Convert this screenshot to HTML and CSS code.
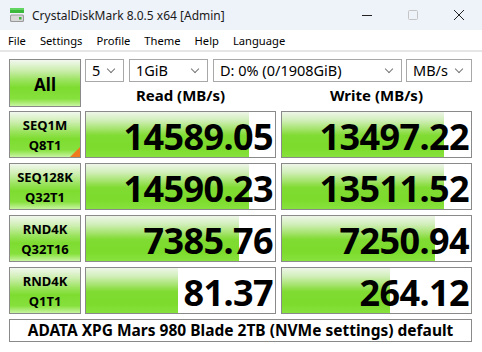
FILE: index.html
```html
<!DOCTYPE html>
<html lang="en">
<head>
    <meta charset="UTF-8">
    <title>CrystalDiskMark 8.0.5 x64 [Admin]</title>
    <link rel="stylesheet" href="styles.css">
</head>
<body>
    <div class="titlebar">
        <svg class="app-icon" width="16" height="16" viewBox="0 0 16 16">
            <rect x="1" y="1" width="14" height="5" fill="#3cb83c"/>
            <rect x="1" y="1" width="14" height="2" fill="#62d462"/>
            <rect x="1" y="7.5" width="14" height="7.5" rx="1.5" fill="#9a9a9a"/>
            <rect x="2" y="8.5" width="12" height="5.5" rx="1" fill="#d8d8d8"/>
            <rect x="10" y="10" width="2.5" height="2.5" fill="#3cb83c"/>
        </svg>
        <span class="title">CrystalDiskMark 8.0.5 x64 [Admin]</span>
        <div class="win-controls">
            <span class="ctl">
                <svg width="12" height="12" viewBox="0 0 12 12"><path d="M1 6.5h10" stroke="#222" stroke-width="1"/></svg>
            </span>
            <span class="ctl">
                <svg width="12" height="12" viewBox="0 0 12 12"><rect x="1.5" y="1.5" width="9" height="9" rx="1" fill="none" stroke="#c4c4c4" stroke-width="1"/></svg>
            </span>
            <span class="ctl">
                <svg width="12" height="12" viewBox="0 0 12 12"><path d="M1 1l10 10M11 1L1 11" stroke="#222" stroke-width="1"/></svg>
            </span>
        </div>
    </div>

    <div class="menubar">
        <span>File</span>
        <span>Settings</span>
        <span>Profile</span>
        <span>Theme</span>
        <span>Help</span>
        <span>Language</span>
    </div>

    <div class="main">
        <div class="top">
            <div class="btn all-btn">All</div>
            <div class="top-right">
                <div class="combos">
                    <div class="combo c-count">5</div>
                    <div class="combo c-size">1GiB</div>
                    <div class="combo c-drive">D: 0% (0/1908GiB)</div>
                    <div class="combo c-unit">MB/s</div>
                </div>
                <div class="heads">
                    <div class="head">Read (MB/s)</div>
                    <div class="head">Write (MB/s)</div>
                </div>
            </div>
        </div>

        <div class="grid" id="results"></div>

        <div class="footer">ADATA XPG Mars 980 Blade 2TB (NVMe settings) default</div>
    </div>

    <script>
        const tests = [
            { name: 'SEQ1M', sub: 'Q8T1', read: 14589.05, write: 13497.22, mark: true },
            { name: 'SEQ128K', sub: 'Q32T1', read: 14590.23, write: 13511.52 },
            { name: 'RND4K', sub: 'Q32T16', read: 7385.76, write: 7250.94 },
            { name: 'RND4K', sub: 'Q1T1', read: 81.37, write: 264.12 }
        ];

        // 对数刻度的进度条
        function level(v) {
            return Math.min(100, (Math.log10(v) + 1) / 6 * 100).toFixed(1);
        }

        function cell(v) {
            return `<div class="value"><div class="bar" style="width:${level(v)}%"></div><span>${v.toFixed(2)}</span></div>`;
        }

        const grid = document.getElementById('results');
        let html = '';
        tests.forEach(t => {
            html += `<div class="btn label">${t.name}<br>${t.sub}${t.mark ? '<i class="mark"></i>' : ''}</div>`;
            html += cell(t.read) + cell(t.write);
        });
        grid.innerHTML = html;
    </script>
</body>
</html>
```

FILE: styles.css
```css
body {
    margin: 0;
    padding: 0;
    width: 482px;
    height: 352px;
    overflow: hidden;
    background-color: #fff;
    font-family: 'Noto Sans', 'Open Sans', sans-serif;
    color: #000;
}
.titlebar {
    height: 30px;
    background-color: #eef2f9;
    display: flex;
    align-items: center;
}
.app-icon {
    margin-left: 9px;
    margin-right: 7px;
}
.title {
    font-size: 12px;
    color: #1a1a1a;
}
.win-controls {
    margin-left: auto;
    display: flex;
}
.ctl {
    width: 46px;
    height: 30px;
    display: flex;
    align-items: center;
    justify-content: center;
}
.menubar {
    height: 20px;
    display: flex;
    align-items: center;
    padding-left: 8px;
    gap: 14px;
    font-size: 11.2px;
    border-bottom: 2px solid #e6e6e6;
    box-sizing: content-box;
}
.main {
    padding: 7px 10px 0 9px;
}
.top {
    display: flex;
    gap: 4px;
}
.btn {
    box-sizing: border-box;
    border: 1px solid #8a8a8a;
    background: linear-gradient(to bottom, #f2f8ee 0%, #cdeeb0 22%, #98e35a 45%, #7edc30 60%, #86e03c 84%, #c8f5a2 100%);
    display: flex;
    align-items: center;
    justify-content: center;
    text-align: center;
    font-weight: bold;
}
.all-btn {
    width: 72px;
    height: 48px;
    font-size: 17px;
    padding-top: 2px;
}
.top-right {
    flex: 1;
}
.combos {
    display: flex;
    gap: 5px;
}
.combo {
    box-sizing: border-box;
    height: 23px;
    border: 1px solid #a8a8a8;
    background-color: #fff;
    font-size: 14.5px;
    line-height: 21px;
    padding-left: 6px;
    position: relative;
}
.combo::after {
    content: '';
    position: absolute;
    right: 9px;
    top: 6px;
    width: 5px;
    height: 5px;
    border-right: 1px solid #777;
    border-bottom: 1px solid #777;
    transform: rotate(45deg);
}
.c-count { width: 39px; }
.c-size { width: 79px; }
.c-drive { width: 189px; }
.c-unit { width: 66px; margin-left: -1px; }
.heads {
    display: flex;
    gap: 5px;
    height: 25px;
    align-items: center;
}
.head {
    width: 191px;
    text-align: center;
    font-size: 15px;
    font-weight: bold;
}
.grid {
    display: grid;
    grid-template-columns: 72px 191px 191px;
    column-gap: 4px;
    row-gap: 5px;
    grid-auto-rows: 47px;
    margin-top: 4px;
}
.grid .value:nth-child(3n) {
    margin-left: 1px;
    width: 191px;
}
.label {
    font-size: 13px;
    line-height: 20px;
    padding-top: 1px;
    position: relative;
}
.mark {
    position: absolute;
    right: 0;
    bottom: 0;
    width: 0;
    height: 0;
    border-left: 10px solid transparent;
    border-bottom: 10px solid #f07a1e;
}
.value {
    box-sizing: border-box;
    border: 1px solid #8a8a8a;
    background-color: #fff;
    position: relative;
    display: flex;
    align-items: center;
    justify-content: flex-end;
    padding-right: 2px;
}
.bar {
    position: absolute;
    left: 0;
    top: 0;
    bottom: 0;
    background: linear-gradient(to bottom, #eef6e8 0%, #d2efbb 18%, #a4e36c 38%, #80db32 52%, #7cdb2c 80%, #88e23e 100%);
}
.value span {
    position: relative;
    font-size: 36px;
    font-weight: bold;
    letter-spacing: -0.6px;
    line-height: 1;
    padding-top: 4px;
}
.footer {
    box-sizing: border-box;
    margin-top: 5px;
    height: 23px;
    width: 463px;
    border: 1px solid #8a8a8a;
    text-align: center;
    font-size: 15.5px;
    font-weight: bold;
    line-height: 21px;
}
```
